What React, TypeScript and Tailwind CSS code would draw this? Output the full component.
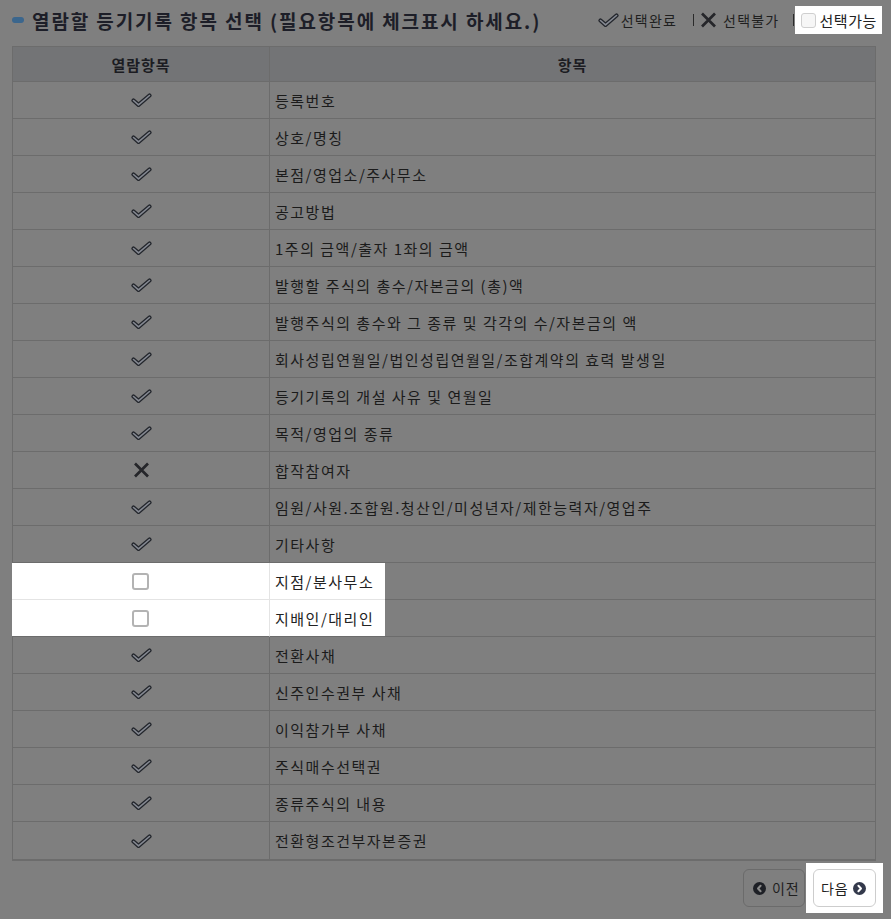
import React from "react";

type Status = "check" | "x" | "box";

const rows: { label: string; status: Status }[] = [
  { label: "등록번호", status: "check" },
  { label: "상호/명칭", status: "check" },
  { label: "본점/영업소/주사무소", status: "check" },
  { label: "공고방법", status: "check" },
  { label: "1주의 금액/출자 1좌의 금액", status: "check" },
  { label: "발행할 주식의 총수/자본금의 (총)액", status: "check" },
  { label: "발행주식의 총수와 그 종류 및 각각의 수/자본금의 액", status: "check" },
  { label: "회사성립연월일/법인성립연월일/조합계약의 효력 발생일", status: "check" },
  { label: "등기기록의 개설 사유 및 연월일", status: "check" },
  { label: "목적/영업의 종류", status: "check" },
  { label: "합작참여자", status: "x" },
  { label: "임원/사원.조합원.청산인/미성년자/제한능력자/영업주", status: "check" },
  { label: "기타사항", status: "check" },
  { label: "지점/분사무소", status: "box" },
  { label: "지배인/대리인", status: "box" },
  { label: "전환사채", status: "check" },
  { label: "신주인수권부 사채", status: "check" },
  { label: "이익참가부 사채", status: "check" },
  { label: "주식매수선택권", status: "check" },
  { label: "종류주식의 내용", status: "check" },
  { label: "전환형조건부자본증권", status: "check" },
];

const Check = () => (
  <svg width="21" height="14" viewBox="0 0 21 14">
    <path d="M2.5 7.5 L7.5 11.8 L18.5 2.5" fill="none" stroke="#23262c" strokeWidth="4.2" strokeLinecap="round" strokeLinejoin="round" />
    <path d="M2.5 7.5 L7.5 11.8 L18.5 2.5" fill="none" stroke="#858992" strokeWidth="1.6" strokeLinecap="round" strokeLinejoin="round" />
  </svg>
);

const XIcon = () => (
  <svg width="17" height="16" viewBox="0 0 17 16">
    <path d="M2 1.5 L15 14.5 M15 1.5 L2 14.5" stroke="#25262a" strokeWidth="2.7" strokeLinecap="butt" />
  </svg>
);

const Box = ({ size = 16 }: { size?: number }) => (
  <div
    className={
      size === 16
        ? "w-[17px] h-[17px] rounded-[3px] border-2 border-[#b3b3b3] bg-white"
        : "w-[15px] h-[15px] rounded-[3px] border border-[#cfcfcf] bg-[#f6f6f6]"
    }
  />
);

const CircleArrow = ({ dir }: { dir: "l" | "r" }) => (
  <svg width="13" height="13" viewBox="0 0 13 13">
    <circle cx="6.5" cy="6.5" r="6.5" fill={dir === "l" ? "#1e2026" : "#343a4c"} />
    <path
      d={dir === "l" ? "M7.6 3.8 L5 6.5 L7.6 9.2" : "M5.4 3.8 L8 6.5 L5.4 9.2"}
      fill="none"
      stroke={dir === "l" ? "#8a8a8a" : "#ffffff"}
      strokeWidth="2"
      strokeLinecap="round"
      strokeLinejoin="round"
    />
  </svg>
);

export default function App() {
  return (
    <div className="w-[891px] h-[919px] bg-[#7f7f7f] font-['Noto_Sans_CJK_KR','Noto_Sans',sans-serif] overflow-hidden">
      {/* Title row */}
      <div className="flex items-center h-[28px] mt-[6px] pl-[12px] pr-[9px]">
        <div className="w-[12px] h-[6px] rounded-full bg-[#3b668d] mr-[8px]" />
        <div className="text-[19px] font-bold text-[#1d1e28] tracking-[1.9px] leading-none">
          열람할 등기기록 항목 선택 (필요항목에 체크표시 하세요.)
        </div>
        <div className="flex-1" />
        <div className="flex items-center text-[14px] text-[#1f1f1f] leading-none">
          <Check />
          <span className="ml-[2px] tracking-[1.2px]">선택완료</span>
          <span className="ml-[16px] w-px h-[12px] bg-[#2a2a2a]" />
          <span className="ml-[6px]"><XIcon /></span>
          <span className="ml-[6px] tracking-[1.2px]">선택불가</span>
          <span className="ml-[14px] w-px h-[12px] bg-[#2a2a2a]" />
          <div className="ml-[1px] flex items-center bg-white h-[28px] pl-[6px] pr-[5px]">
            <Box size={14} />
            <span className="ml-[3px] text-[15px] text-[#222] tracking-[0.6px]">선택가능</span>
          </div>
        </div>
      </div>

      {/* Table */}
      <div className="mt-[12px] ml-[12px] w-[864px] border-t border-b-2 border-[#6c6c6c] text-[15px] leading-none">
        <div className="flex h-[35px] bg-[#737476] border-b border-x border-[#6c6c6c] font-bold text-[#1c1c22] tracking-[1px]">
          <div className="w-[257px] flex items-center justify-center border-r border-[#6c6c6c]">열람항목</div>
          <div className="flex-1 flex items-center justify-center">항목</div>
        </div>
        {rows.map((r, i) => {
          const last = i === rows.length - 1;
          if (r.status === "box") {
            const lightBottom = r.label === "지점/분사무소";
            return (
              <div key={i} className="flex h-[37px]">
                <div
                  className={
                    "w-[258px] bg-white flex items-center justify-center border-r border-r-[#e4e4e4] border-b " +
                    (lightBottom ? "border-b-[#e4e4e4]" : "border-b-[#6c6c6c]")
                  }
                >
                  <Box />
                </div>
                <div
                  className={
                    "w-[115px] bg-white flex items-center pl-[5px] text-[#222] tracking-[1.5px] border-b " +
                    (lightBottom ? "border-b-[#e4e4e4]" : "border-b-[#6c6c6c]")
                  }
                >
                  {r.label}
                </div>
                <div className="flex-1 border-b border-r border-[#6c6c6c]" />
              </div>
            );
          }
          return (
            <div
              key={i}
              className={"flex h-[37px] border-x border-[#6c6c6c] " + (last ? "" : "border-b")}
            >
              <div className="w-[257px] flex items-center justify-center border-r border-[#6c6c6c]">
                {r.status === "check" ? <Check /> : <XIcon />}
              </div>
              <div className="flex-1 flex items-center pl-[5px] text-[#1b1b1b] tracking-[1.5px]">{r.label}</div>
            </div>
          );
        })}
      </div>

      {/* Buttons */}
      <div className="flex justify-end items-center mt-[2px] pr-[8px]">
        <div className="flex items-center h-[38px] w-[62px] rounded-[6px] border border-[#6b6b6b] pl-[9px] text-[14px] text-[#1e1e1e] leading-none tracking-[0.8px]">
          <CircleArrow dir="l" />
          <span className="ml-[6px]">이전</span>
        </div>
        <div className="ml-[1px] bg-white px-[7px] py-[6px]">
          <div className="flex items-center h-[38px] w-[63px] rounded-[6px] border border-[#cdcdcd] pl-[7px] text-[14px] text-[#222] leading-none tracking-[0.8px]">
            <span>다음</span>
            <span className="ml-[5px]"><CircleArrow dir="r" /></span>
          </div>
        </div>
      </div>
    </div>
  );
}
